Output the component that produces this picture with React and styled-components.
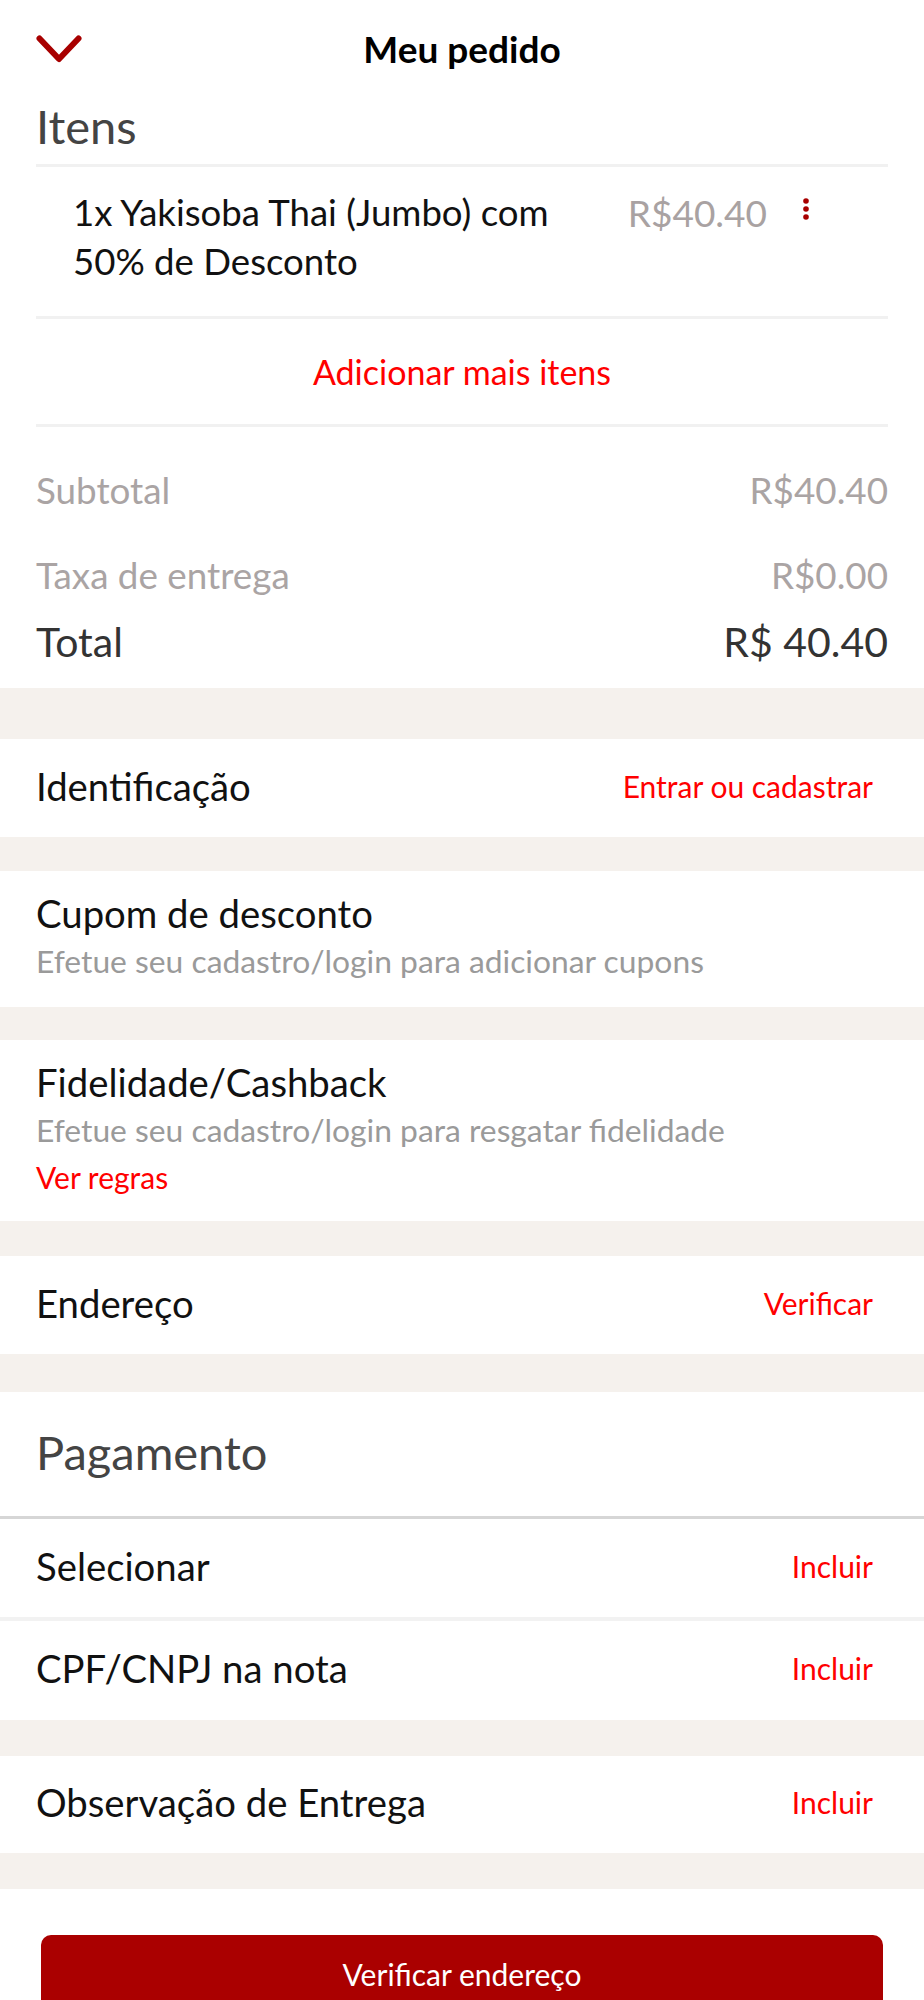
import React from "react"
import styled, { createGlobalStyle } from "styled-components"

const GlobalStyle = createGlobalStyle`
  body {
    margin: 0;
    background: #ffffff;
    font-family: Lato, "Open Sans", sans-serif;
    color: #000;
  }
  * {
    box-sizing: border-box;
  }
`

const Page = styled.div`
  width: 924px;
  background: #fff;
`

const Header = styled.div`
  display: grid;
  grid-template-columns: 1fr auto 1fr;
  align-items: center;
  height: 96px;
  padding: 0 36px;
  h1 {
    margin: 0;
    font-size: 37px;
    font-weight: 700;
    color: #000;
  }
`

const BackButton = styled.button`
  justify-self: start;
  display: flex;
  padding: 0;
  border: 0;
  background: none;
  margin-top: 2px;
`

const Block = styled.section`
  background: #fff;
  padding: ${props => props.pad || "0 36px"};
`

const BigTitle = styled.h2`
  margin: 0;
  font-size: 47px;
  font-weight: 400;
  line-height: 56px;
  color: #444;
`

const Divider = styled.div`
  height: ${props => props.size || 3}px;
  background: ${props => props.color || "#f1f1f1"};
`

const ItemRow = styled.div`
  display: flex;
  align-items: flex-start;
  padding: 21px 79px 30px 37px;
`

const ItemName = styled.div`
  flex: 1;
  font-size: 36.6px;
  line-height: 49px;
  color: #111;
  margin-right: 40px;
`

const ItemPrice = styled.div`
  font-size: 37px;
  line-height: 49px;
  color: #a9a2a2;
`

const Dots = styled.svg`
  margin-left: 36px;
  margin-top: 10px;
`

const AddMore = styled.div`
  height: 105px;
  display: flex;
  align-items: center;
  justify-content: center;
  font-size: 34px;
  color: #ff0000;
`

const Totals = styled.div`
  padding: 38px 0 21px;
`

const TotalLine = styled.div`
  display: flex;
  justify-content: space-between;
  align-items: center;
  height: ${props => (props.strong ? 52 : 50)}px;
  margin-top: ${props => props.gap || 0}px;
  font-size: ${props => (props.strong ? 41 : 36.8)}px;
  color: ${props => (props.strong ? "#333" : "#aaa4a4")};
`

const Band = styled.div`
  height: ${props => props.h}px;
  background: #f5f1ed;
`

const ActionRow = styled.div`
  display: flex;
  justify-content: space-between;
  align-items: center;
  height: ${props => props.h || 98}px;
  padding: 0 51px 5px 36px;
  background: #fff;
`

const RowTitle = styled.div`
  font-size: 38.3px;
  line-height: 44px;
  color: #111;
`

const RedLink = styled.a`
  font-size: 30px;
  line-height: 40px;
  color: #ff0000;
  text-decoration: none;
  display: block;
`

const Card = styled.div`
  background: #fff;
  padding: 20px 36px ${props => props.bottom || 25}px;
`

const Hint = styled.div`
  font-size: 31.8px;
  line-height: 42px;
  color: #9a9a9a;
  margin-top: 5px;
`

const Footer = styled.div`
  background: #fff;
  padding: 46px 41px 40px;
`

const PrimaryButton = styled.button`
  width: 100%;
  height: 78px;
  border: 0;
  border-radius: 10px;
  background: #aa0000;
  color: #fff;
  font-family: Lato, sans-serif;
  font-size: 30px;
`

const Chevron = () => (
  <svg width="46" height="28" viewBox="0 0 46 28">
    <polyline
      points="3.5,3.5 23,24 42.5,3.5"
      fill="none"
      stroke="#a80000"
      strokeWidth="6"
      strokeLinecap="round"
      strokeLinejoin="round"
    />
  </svg>
)

const actions = [
  { id: "cpf", title: "CPF/CNPJ na nota", link: "Incluir", h: 99 },
]

export default function App() {
  return (
    <Page>
      <GlobalStyle />
      <Block pad="0">
        <Header>
          <BackButton aria-label="Fechar">
            <Chevron />
          </BackButton>
          <h1>Meu pedido</h1>
          <span />
        </Header>
      </Block>

      <Block>
        <BigTitle style={{ marginTop: 2, paddingBottom: 10 }}>Itens</BigTitle>
        <Divider />
        <ItemRow>
          <ItemName>1x Yakisoba Thai (Jumbo) com 50% de Desconto</ItemName>
          <ItemPrice>R$40.40</ItemPrice>
          <Dots width="6" height="22" viewBox="0 0 6 22">
            <circle cx="3" cy="3" r="2.8" fill="#a80000" />
            <circle cx="3" cy="11" r="2.8" fill="#a80000" />
            <circle cx="3" cy="19" r="2.8" fill="#a80000" />
          </Dots>
        </ItemRow>
        <Divider />
        <AddMore>Adicionar mais itens</AddMore>
        <Divider />
        <Totals>
          <TotalLine>
            <span>Subtotal</span>
            <span>R$40.40</span>
          </TotalLine>
          <TotalLine gap={35}>
            <span>Taxa de entrega</span>
            <span>R$0.00</span>
          </TotalLine>
          <TotalLine strong gap={15}>
            <span>Total</span>
            <span>R$ 40.40</span>
          </TotalLine>
        </Totals>
      </Block>

      <Band h={51} />
      <ActionRow>
        <RowTitle>Identificação</RowTitle>
        <RedLink>Entrar ou cadastrar</RedLink>
      </ActionRow>

      <Band h={34} />
      <Card>
        <RowTitle>Cupom de desconto</RowTitle>
        <Hint>Efetue seu cadastro/login para adicionar cupons</Hint>
      </Card>

      <Band h={33} />
      <Card bottom={24}>
        <RowTitle>Fidelidade/Cashback</RowTitle>
        <Hint>Efetue seu cadastro/login para resgatar fidelidade</Hint>
        <RedLink style={{ marginTop: 6 }}>Ver regras</RedLink>
      </Card>

      <Band h={35} />
      <ActionRow>
        <RowTitle>Endereço</RowTitle>
        <RedLink>Verificar</RedLink>
      </ActionRow>

      <Band h={38} />
      <Block pad="32px 36px 36px">
        <BigTitle>Pagamento</BigTitle>
      </Block>
      <Divider color="#d6d6d6" />
      <ActionRow>
        <RowTitle>Selecionar</RowTitle>
        <RedLink>Incluir</RedLink>
      </ActionRow>
      <Divider size={4} color="#f2f2f2" />
      {actions.map(item => (
        <ActionRow key={item.id} h={item.h}>
          <RowTitle>{item.title}</RowTitle>
          <RedLink>{item.link}</RedLink>
        </ActionRow>
      ))}

      <Band h={36} />
      <ActionRow h={97}>
        <RowTitle>Observação de Entrega</RowTitle>
        <RedLink>Incluir</RedLink>
      </ActionRow>

      <Band h={36} />
      <Footer>
        <PrimaryButton>Verificar endereço</PrimaryButton>
      </Footer>
    </Page>
  )
}
